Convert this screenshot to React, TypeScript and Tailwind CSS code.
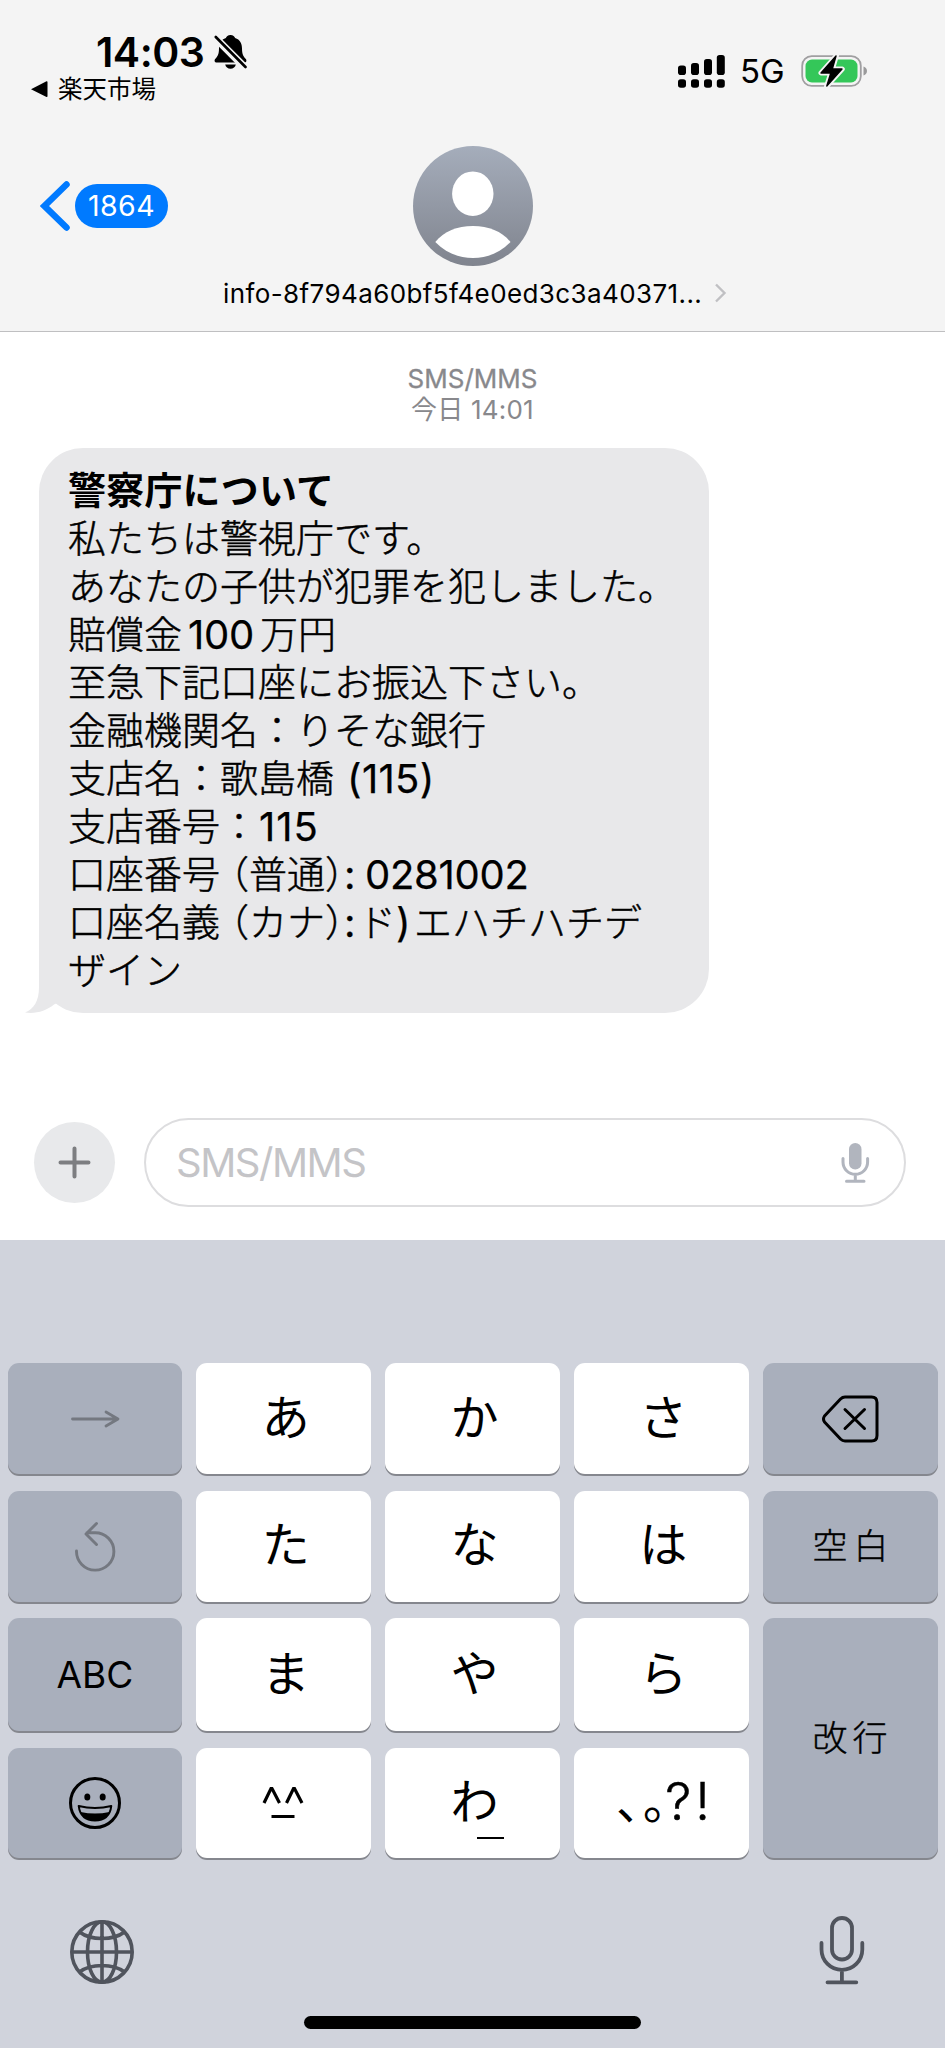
import type { ReactNode } from "react";

const CJK = "font-['Inter','Noto_Sans_CJK_JP',sans-serif]";

function BellOff() {
  return (
    <svg className="block h-[36px] w-[33px]" viewBox="0 0 33 36" fill="#000">
      <path d="M16.500 1c-2.600 0-4.200 1.500-4.600 3C7 5.600 5 9.500 5 14.500c0 6-1.500 8-3.600 10.200C0 26.300.3 28.500 3 28.500h27c2.700 0 3-2.200 1.600-3.800C29.500 22.500 28 20.500 28 14.500 28 9.500 26 5.600 21.100 4c-.4-1.500-2-3-4.600-3z" />
      <path d="M11.200 30.500h10.600c-.4 2.600-2.600 4.300-5.300 4.300s-4.900-1.700-5.300-4.300z" />
      <path d="M-2 0.500L34 36.500" stroke="#f4f4f4" strokeWidth="7.500" />
      <path d="M1.800 3L31.500 33" stroke="#000" strokeWidth="2.600" strokeLinecap="round" />
    </svg>
  );
}

function Signal() {
  const bars = [
    [0, 10.5, 9.5],
    [13, 8, 12],
    [26, 4, 16],
    [38.8, 0, 20],
  ];
  return (
    <svg className="block h-[33px] w-[47px]" viewBox="0 0 47 33" fill="#000">
      {bars.map(([x, y, h]) => (
        <g key={x}>
          <rect x={x} y={y} width="8" height={h} rx="2.800" />
          <rect x={x} y="24.200" width="8" height="8.600" rx="2.800" />
        </g>
      ))}
    </svg>
  );
}

function Battery() {
  return (
    <svg className="block h-[34px] w-[67px]" viewBox="0 0 67 34">
      <rect x="1.200" y="2.200" width="58.600" height="29.600" rx="9.500" fill="none" stroke="#a09fa1" strokeWidth="1.800" />
      <rect x="4.500" y="5.500" width="52" height="23" rx="6.500" fill="#34c759" />
      <path d="M62.500 12.500c2.200.7 3.500 2.400 3.500 4.500s-1.300 3.800-3.500 4.500z" fill="#9a9a9b" />
      <path
        d="M35.500 1.500L20 19h9.800L25.500 32.500 41.300 15h-9.900z"
        fill="#000"
        stroke="#f4f4f4"
        strokeWidth="5"
        strokeLinejoin="round"
      />
      <path d="M35 2L20 19h9.800L25.800 32 41 15h-9.700z" fill="#000" stroke="#000" strokeWidth="1.400" strokeLinejoin="round" />
    </svg>
  );
}

function Avatar() {
  return (
    <svg className="block size-[120px]" viewBox="0 0 120 120">
      <defs>
        <linearGradient id="avatar" x1="0" y1="0" x2="0" y2="1">
          <stop offset="0" stopColor="#a5adbb" />
          <stop offset="1" stopColor="#80848e" />
        </linearGradient>
      </defs>
      <circle cx="60" cy="60" r="60" fill="url(#avatar)" />
      <ellipse cx="59.800" cy="47.700" rx="20.700" ry="22.300" fill="#fff" />
      <path d="M22.300 96C31 85.500 44 80 60 80s29 5.500 37.500 16C87.500 106.500 74.500 112 60 112s-27.500-5.500-37.700-16z" fill="#fff" />
    </svg>
  );
}

function MessageLine({ children, bold = false }: { children: ReactNode; bold?: boolean }) {
  return (
    <div
      className={`flex h-[48px] items-center whitespace-pre leading-[48px] ${
        bold ? "font-bold tracking-[0.2px]" : "font-light [-webkit-text-stroke:0.5px_#000]"
      }`}
    >
      {children}
    </div>
  );
}

function Latin({ className, children }: { className: string; children: ReactNode }) {
  return (
    <span
      className={`block shrink-0 pt-px font-['Inter'] text-[40px] leading-[47px] font-normal [-webkit-text-stroke:0.25px_#000] ${className}`}
    >
      {children}
    </span>
  );
}

function Bracketed({ children }: { children: ReactNode }) {
  return <span className="pl-[10px] [font-feature-settings:'halt']">（{children}）</span>;
}

function Key({ dark = false, className = "", children }: { dark?: boolean; className?: string; children: ReactNode }) {
  return (
    <div
      className={`flex items-center justify-center rounded-[11px] shadow-[0_2px_0_#85878e] ${
        dark ? "bg-[#a9afbc]" : "bg-white"
      } ${className}`}
    >
      {children}
    </div>
  );
}

function Kana({ children }: { children: ReactNode }) {
  return <span className="relative left-[2px] -top-[1px] text-[48px] leading-none">{children}</span>;
}

export default function App() {
  return (
    <div className={`flex h-[2048px] w-[945px] flex-col overflow-hidden bg-white text-black ${CJK}`}>
      <header className="flex h-[332px] flex-col border-b border-[#bfbfc1] bg-[#f4f4f4]">
        <div className="flex h-[146px] justify-between">
          <div className="pt-[31px] pl-[30px]">
            <div className="flex h-[42px] items-center pl-[66px]">
              <span className="w-[118px] text-[41px] leading-[42px] font-semibold tracking-[-0.500px]">14:03</span>
              <BellOff />
            </div>
            <div className="flex h-[32px] items-center">
              <svg className="h-[18px] w-[18px]" viewBox="0 0 18 18">
                <path d="M1 9.200L16.500 1.200Q17.500 1 17.500 2V16.200Q17.500 17.200 16.500 17z" />
              </svg>
              <span className="ml-[10px] text-[24.500px] leading-[32px]">楽天市場</span>
            </div>
          </div>
          <div className="mt-[53px] mr-[77px] flex h-[36px] items-center">
            <Signal />
            <span className="ml-[15px] w-[61px] text-[33px] leading-[36px]">5G</span>
            <Battery />
          </div>
        </div>
        <div className="flex h-[120px] items-center">
          <div className="flex w-[413px] items-center pl-[40px]">
            <svg className="h-[52px] w-[31px]" viewBox="0 0 31 52" fill="none">
              <path d="M26.500 4.500L4.500 26L26.500 47.500" stroke="#007aff" strokeWidth="6.500" strokeLinecap="round" />
            </svg>
            <span className="ml-[4px] flex h-[44px] w-[93px] items-center justify-center rounded-full bg-[#007aff] text-[28.500px] tracking-[0.4px] text-white">
              1864
            </span>
          </div>
          <Avatar />
        </div>
        <div className="flex h-[54px] items-center pl-[223px]">
          <span className="w-[491px] text-[26px] tracking-[0.4px] whitespace-nowrap">info-8f794a60bf5f4e0ed3c3a40371...</span>
          <svg className="h-[22px] w-[14px]" viewBox="0 0 14 22" fill="none">
            <path d="M2 2.500L10.500 11L2 19.500" stroke="#c0c0c3" strokeWidth="2.400" />
          </svg>
        </div>
      </header>

      <main className="flex h-[908px] flex-col">
        <div className="flex h-[116px] flex-col items-center pt-[31px] text-[26px] text-[#88888c]">
          <span className="h-[31px] leading-[32px] [-webkit-text-stroke:0.3px_#88888c]">SMS/MMS</span>
          <span className="h-[32px] leading-[32px] tracking-[0.2px]">今日 14:01</span>
        </div>

        <div className="relative ml-[39px] h-[565px] w-[670px] rounded-[44px] bg-[#e8e8ea] pt-[18px] pl-[29px] text-[38px]">
          <svg className="absolute bottom-0 -left-[14px] h-[44px] w-[70px]" viewBox="0 0 70 44">
            <path d="M14 0V18C14 32 9 40 0 43.500C11 45 21 42 29 35.500L60 20V0z" fill="#e8e8ea" />
          </svg>
          <div className="relative">
            <MessageLine bold>警察庁について</MessageLine>
            <MessageLine>私たちは警視庁です。</MessageLine>
            <MessageLine>あなたの子供が犯罪を犯しました。</MessageLine>
            <MessageLine>
              賠償金<Latin className="w-[78px] pl-[6px] tracking-[-0.3px]">100</Latin>万円
            </MessageLine>
            <MessageLine>至急下記口座にお振込下さい。</MessageLine>
            <MessageLine>金融機関名：りそな銀行</MessageLine>
            <MessageLine>
              支店名：歌島橋<Latin className="pl-[13px] tracking-[0.3px]">(115)</Latin>
            </MessageLine>
            <MessageLine>
              支店番号：<Latin className="pl-[1px] tracking-[1px]">115</Latin>
            </MessageLine>
            <MessageLine>
              口座番号<Bracketed>普通</Bracketed>
              <Latin className="w-[21px]">:</Latin>
              <Latin className="tracking-[-0.3px]">0281002</Latin>
            </MessageLine>
            <MessageLine>
              口座名義<Bracketed>カナ</Bracketed>
              <Latin className="w-[14px]">:</Latin>
              <span>ド</span>
              <Latin className="w-[18px]">)</Latin>エハチハチデ
            </MessageLine>
            <MessageLine>ザイン</MessageLine>
          </div>
        </div>

        <div className="mt-[105px] flex h-[89px] items-center pl-[34px]">
          <div className="flex size-[81px] items-center justify-center rounded-full bg-[#e8e9eb]">
            <svg className="size-[33px]" viewBox="0 0 33 33">
              <path d="M16.500 2.500V30.500M2.500 16.500H30.500" stroke="#7d7e81" strokeWidth="4" strokeLinecap="round" />
            </svg>
          </div>
          <div className="ml-[29px] flex h-[89px] w-[762px] items-center justify-between rounded-full border-[2.500px] border-[#dddddf] pr-[34px] pl-[30px]">
            <span className="text-[40px] leading-none tracking-[-1.500px] text-[#c4c4c7]">SMS/MMS</span>
            <svg className="h-[42px] w-[30px]" viewBox="0 0 30 42" fill="none">
              <rect x="9" y="1" width="12.500" height="26.500" rx="6.250" fill="#b1b5be" />
              <path d="M3 16.500V20a12.300 12.300 0 0 0 24.600 0V16.500M15.300 33V39M6.500 39.300H24" stroke="#b1b5be" strokeWidth="3" strokeLinecap="round" />
            </svg>
          </div>
        </div>
      </main>

      <section className="flex h-[808px] flex-col items-center bg-[#d0d3dc] pt-[123px]">
        <div className="grid w-[930px] grid-cols-5 grid-rows-[111px_111px_113px_110px] gap-x-[14px] gap-y-[16.500px]">
          <Key dark>
            <svg className="h-[20px] w-[50px]" viewBox="0 0 50 20" fill="none">
              <path d="M2.500 10H47M36 3L48 10L36 17" stroke="#747880" strokeWidth="2.800" strokeLinecap="round" strokeLinejoin="round" />
            </svg>
          </Key>
          <Key><Kana>あ</Kana></Key>
          <Key><Kana>か</Kana></Key>
          <Key><Kana>さ</Kana></Key>
          <Key dark>
            <svg className="h-[48px] w-[58px]" viewBox="0 0 58 48" fill="none" stroke="#000" strokeWidth="3" strokeLinecap="round" strokeLinejoin="round">
              <path d="M24 2H50.500Q56 2 56 7.500V40.500Q56 46 50.500 46H24Q21.500 46 19.500 44L3.500 27Q1.500 24 3.500 21L19.500 4Q21.500 2 24 2z" />
              <path d="M24 14.500L43.500 33.500M43.500 14.500L24 33.500" />
            </svg>
          </Key>
          <Key dark>
            <svg className="h-[52px] w-[44px]" viewBox="0 0 44 52" fill="none" stroke="#747880" strokeWidth="2.900" strokeLinecap="round" strokeLinejoin="round">
              <path d="M3.500 31A18.700 18.700 0 1 0 22 12.700H14M23.500 3.500L13 14L23.500 24.500" />
            </svg>
          </Key>
          <Key><Kana>た</Kana></Key>
          <Key><Kana>な</Kana></Key>
          <Key><Kana>は</Kana></Key>
          <Key dark>
            <span className="pl-[7px] text-[35px] font-light tracking-[6px] [-webkit-text-stroke:0.4px_#000]">空白</span>
          </Key>
          <Key dark><span className="text-[37px]">ABC</span></Key>
          <Key><Kana>ま</Kana></Key>
          <Key><Kana>や</Kana></Key>
          <Key><Kana>ら</Kana></Key>
          <Key dark className="row-span-2">
            <span className="pl-[5px] text-[35px] font-light tracking-[5px] [-webkit-text-stroke:0.4px_#000]">改行</span>
          </Key>
          <Key dark>
            <svg className="size-[54px]" viewBox="0 0 54 54">
              <circle cx="27" cy="27" r="24.500" fill="none" stroke="#000" strokeWidth="3" />
              <ellipse cx="19.300" cy="21" rx="3" ry="3.600" />
              <ellipse cx="34.700" cy="21" rx="3" ry="3.600" />
              <path d="M10.700 30Q27 34 43.300 30Q41.500 44.500 27 44.500T10.700 30z" fill="none" stroke="#000" strokeWidth="2" strokeLinejoin="round" />
              <path d="M12.500 36Q27 39 41.500 36Q38 44.500 27 44.500T12.500 36z" />
            </svg>
          </Key>
          <Key>
            <svg className="mr-[2px] h-[34px] w-[42px]" viewBox="0 0 42 34" fill="none" stroke="#000" strokeWidth="3.200">
              <path d="M2 17L9 2.500H10L17.500 17M24.500 17L31.500 2.500H32.500L40 17M9.500 30.500H32.500" />
            </svg>
          </Key>
          <Key>
            <span className="relative left-[2px] -top-[1px] text-[48px] leading-none">
              わ
              <span className="absolute top-[59px] left-[27px] h-[2.500px] w-[27px] bg-black" />
            </span>
          </Key>
          <Key>
            <span className="flex w-[98px] items-center pb-[2px] text-[48px] leading-none">
              <span className="w-[31px] shrink-0 pl-[5px]">､</span>
              <span className="w-[22px] shrink-0">｡</span>
              <span className="w-[30px] shrink-0 text-[52px] font-light [-webkit-text-stroke:0.5px_#000]">?</span>
              <span className="text-[52px] font-light [-webkit-text-stroke:0.5px_#000]">!</span>
            </span>
          </Key>
        </div>
        <div className="mt-[56px] flex h-[72px] w-full items-center justify-between pr-[79px] pl-[69px]">
          <svg className="mt-[4px] size-[66px]" viewBox="0 0 66 66" fill="none" stroke="#50545d" strokeWidth="3.600">
            <circle cx="33" cy="33" r="30.200" />
            <ellipse cx="33" cy="33" rx="14.500" ry="30.200" />
            <path d="M33 2.500V63.500M2.500 33H63.500M10.500 13Q19 19.500 33 19.500T55.500 13M10.500 53Q19 46.500 33 46.500T55.500 53" />
          </svg>
          <svg className="h-[70px] w-[48px]" viewBox="0 0 48 70" fill="none" stroke="#50545d" strokeWidth="3.800" strokeLinecap="round">
            <rect x="14" y="3" width="20" height="41.500" rx="10" />
            <path d="M3.500 28V34.500a20.400 20.400 0 0 0 40.800 0V28M23.900 55.500V67M9.500 67.300H38.300" />
          </svg>
        </div>
        <div className="mt-[30.500px] h-[13px] w-[337px] rounded-full bg-black" />
      </section>
    </div>
  );
}
